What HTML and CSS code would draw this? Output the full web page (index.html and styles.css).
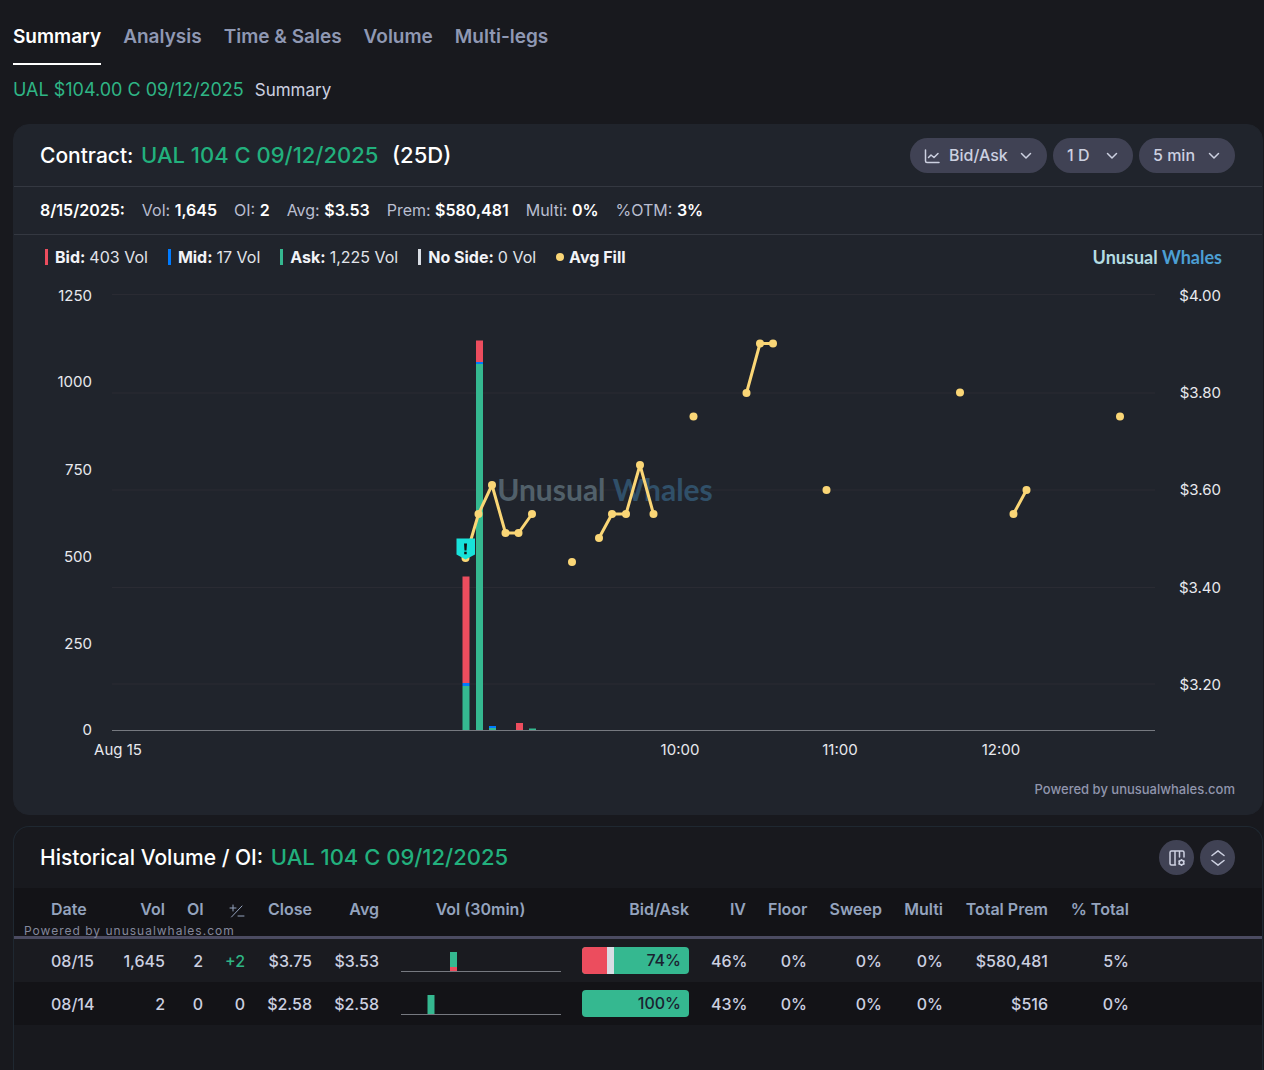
FILE: index.html
```html
<!DOCTYPE html>
<html lang="en">
<head>
  <meta charset="UTF-8">
  <title>UAL $104.00 C 09/12/2025 – Summary</title>
  <meta name="viewport" content="width=device-width, initial-scale=1.0">
  <link rel="stylesheet" href="styles.css">
</head>
<body>

<nav class="tabs">
  <a class="tab active" href="#summary">Summary</a>
  <a class="tab" href="#analysis">Analysis</a>
  <a class="tab" href="#time-sales">Time &amp; Sales</a>
  <a class="tab" href="#volume">Volume</a>
  <a class="tab" href="#multi-legs">Multi-legs</a>
</nav>

<div class="crumbs">
  <a href="#contract">UAL $104.00 C 09/12/2025</a>
  <span>Summary</span>
</div>

<main>
<section class="card contract" id="contract">
  <header class="card-head">
    <h2>Contract: <a href="#contract">UAL 104 C 09/12/2025</a> <span class="days">(25D)</span></h2>
    <div class="controls">
      <label class="pill">
        <svg class="icon" width="16" height="16" viewBox="0 0 16 16"><path d="M1.500 2v11a1.500 1.500 0 0 0 1.500 1.500H15M4.500 9.500l2.500-2.500 3 2.500 4-4"/></svg>
        <select aria-label="Series"><option>Bid/Ask</option></select>
        <svg class="chevron" width="12" height="8" viewBox="0 0 12 8"><path d="M1.500 1.500 6 6l4.500-4.500"/></svg>
      </label>
      <label class="pill">
        <select aria-label="Range"><option>1 D</option></select>
        <svg class="chevron" width="12" height="8" viewBox="0 0 12 8"><path d="M1.500 1.500 6 6l4.500-4.500"/></svg>
      </label>
      <label class="pill">
        <select aria-label="Interval"><option>5 min</option></select>
        <svg class="chevron" width="12" height="8" viewBox="0 0 12 8"><path d="M1.500 1.500 6 6l4.500-4.500"/></svg>
      </label>
    </div>
  </header>

  <div class="stats">
    <b>8/15/2025:</b>
    <span>Vol: <b>1,645</b></span>
    <span>OI: <b>2</b></span>
    <span>Avg: <b>$3.53</b></span>
    <span>Prem: <b>$580,481</b></span>
    <span>Multi: <b>0%</b></span>
    <span>%OTM: <b>3%</b></span>
  </div>

  <div class="legend">
    <span class="key bid"><b>Bid:</b> 403 Vol</span>
    <span class="key mid"><b>Mid:</b> 17 Vol</span>
    <span class="key ask"><b>Ask:</b> 1,225 Vol</span>
    <span class="key none"><b>No Side:</b> 0 Vol</span>
    <span class="key fill"><b>Avg Fill</b></span>
    <div class="brand">Unusual <span>Whales</span></div>
  </div>

  <svg class="chart" viewBox="14 280 1248 490" role="img" aria-label="Volume by side and average fill">
    <g class="grid">
      <path d="M112 294.500H1155M112 393H1155M112 490H1155M112 587.500H1155M112 684H1155"/>
    </g>
    <text class="watermark" x="605" y="501"><tspan class="wm-a">Unusual</tspan> <tspan class="wm-b">Whales</tspan></text>
    <g class="red">
      <rect x="462.500" y="576.500" width="7" height="106.500"/>
      <rect x="476" y="340.500" width="7" height="21.500"/>
      <rect x="516" y="723" width="7" height="7"/>
    </g>
    <g class="blue">
      <rect x="462.500" y="683" width="7" height="3"/>
      <rect x="476" y="362" width="7" height="2"/>
      <rect x="489" y="726" width="7" height="2"/>
    </g>
    <g class="green">
      <rect x="462.500" y="686" width="7" height="44"/>
      <rect x="476" y="364" width="7" height="366"/>
      <rect x="489" y="728" width="7" height="2"/>
      <rect x="529" y="728.500" width="7" height="1.500"/>
    </g>
    <path class="axis" d="M112 730.500H1155"/>

    <path class="avg" d="M465.500 558 478.500 514 492 485 505.500 533H518.500L532 514M599 538 612 514H626L640 465 653.500 514M746.500 393 760 343.500H773M1013.500 514 1026.500 490"/>
    <g class="dots">
      <circle cx="465.500" cy="558" r="4"/><circle cx="478.500" cy="514" r="4"/><circle cx="492" cy="485" r="4"/>
      <circle cx="505.500" cy="533" r="4"/><circle cx="518.500" cy="533" r="4"/><circle cx="532" cy="514" r="4"/>
      <circle cx="572" cy="562" r="4"/><circle cx="599" cy="538" r="4"/><circle cx="612" cy="514" r="4"/>
      <circle cx="626" cy="514" r="4"/><circle cx="640" cy="465" r="4"/><circle cx="653.500" cy="514" r="4"/>
      <circle cx="693.500" cy="416.500" r="4"/><circle cx="746.500" cy="393" r="4"/><circle cx="760" cy="343.500" r="4"/>
      <circle cx="773" cy="343.500" r="4"/><circle cx="826.500" cy="490" r="4"/><circle cx="960" cy="392.500" r="4"/>
      <circle cx="1013.500" cy="514" r="4"/><circle cx="1026.500" cy="490" r="4"/><circle cx="1120" cy="416.500" r="4"/>
    </g>
    <path class="flag" d="M456.500 538.500h18.500v16l-9.500 5-9-5z"/>
    <path class="bang" d="M464 543.500h3l-.5 7h-2zM464.200 551.800h2.500v2.400h-2.500z"/>

    <g class="labels end">
      <text x="92" y="301">1250</text>
      <text x="92" y="387">1000</text>
      <text x="92" y="475">750</text>
      <text x="92" y="562">500</text>
      <text x="92" y="649">250</text>
      <text x="92" y="735">0</text>
      <text x="1221" y="301">$4.00</text>
      <text x="1221" y="398">$3.80</text>
      <text x="1221" y="495">$3.60</text>
      <text x="1221" y="593">$3.40</text>
      <text x="1221" y="690">$3.20</text>
    </g>
    <g class="labels center">
      <text x="118" y="755">Aug 15</text>
      <text x="680" y="755">10:00</text>
      <text x="840" y="755">11:00</text>
      <text x="1001" y="755">12:00</text>
    </g>
  </svg>

  <footer class="powered">Powered by unusualwhales.com</footer>
</section>

<section class="card history" id="history">
  <header class="card-head">
    <h2>Historical Volume / OI: <a href="#history">UAL 104 C 09/12/2025</a></h2>
    <div class="controls">
      <button class="round" type="button" aria-label="Columns">
        <svg class="icon" width="16" height="16" viewBox="0 0 16 16"><path d="M6.500 15h-4A1.500 1.500 0 0 1 1 13.500v-11A1.500 1.500 0 0 1 2.500 1h11A1.500 1.500 0 0 1 15 2.500V7M6 1v14M10.500 1v6"/><circle cx="12.500" cy="12.500" r="2.300"/><path d="M12.500 9.700v.3M12.500 15v.3M10 11l.2.200M15 11l-.2.200M10 14l.2-.2M15 14l-.2-.2"/></svg>
      </button>
      <button class="round" type="button" aria-label="Expand">
        <svg class="icon" width="16" height="16" viewBox="0 0 16 16"><path d="M2 5.500 8 .800l6 4.700M2 10.500l6 4.700 6-4.700"/></svg>
      </button>
    </div>
  </header>

  <div class="table-wrap">
    <table>
      <colgroup>
        <col class="w-date"><col class="w-vol"><col class="w-oi"><col class="w-diff"><col class="w-vol"><col class="w-vol">
        <col class="w-spark"><col class="w-side"><col class="w-iv"><col class="w-floor"><col class="w-sweep"><col class="w-floor">
        <col class="w-prem"><col class="w-total"><col>
      </colgroup>
      <thead>
        <tr>
          <th>Date</th><th>Vol</th><th>OI</th>
          <th><svg class="diff" width="16" height="14" viewBox="0 0 16 14" role="img" aria-label="Change"><path d="M1 4h6M4 1v6M2.500 13 13 2M9 12h6"/></svg></th>
          <th>Close</th><th>Avg</th><th>Vol (30min)</th><th>Bid/Ask</th><th>IV</th><th>Floor</th>
          <th>Sweep</th><th>Multi</th><th>Total Prem</th><th>% Total</th><th></th>
        </tr>
      </thead>
      <tbody>
        <tr>
          <td>08/15</td><td>1,645</td><td>2</td><td class="up">+2</td><td>$3.75</td><td>$3.53</td>
          <td><svg class="spark" width="160" height="28" viewBox="0 0 160 28"><path class="green" d="M49 5h7v15h-7z"/><path class="red" d="M49 20h7v4h-7z"/><path class="axis" d="M0 24.500h160"/></svg></td>
          <td><div class="side"><i class="s-bid" style="width:23.500%"></i><i class="s-none" style="width:6.500%"></i><span>74%</span></div></td>
          <td>46%</td><td>0%</td><td>0%</td><td>0%</td><td>$580,481</td><td>5%</td><td></td>
        </tr>
        <tr>
          <td>08/14</td><td>2</td><td>0</td><td>0</td><td>$2.58</td><td>$2.58</td>
          <td><svg class="spark" width="160" height="28" viewBox="0 0 160 28"><path class="green" d="M26.500 5h7v19h-7z"/><path class="axis" d="M0 24.500h160"/></svg></td>
          <td><div class="side"><span>100%</span></div></td>
          <td>43%</td><td>0%</td><td>0%</td><td>0%</td><td>$516</td><td>0%</td><td></td>
        </tr>
      </tbody>
    </table>
    <div class="table-credit">Powered by unusualwhales.com</div>
  </div>
</section>
</main>

</body>
</html>
```

FILE: styles.css
```css
* { box-sizing: border-box; }
body {
  margin: 0;
  min-height: 100vh;
  display: flex;
  flex-direction: column;
  padding: 0 1px 0 13px;
  background: #18191e;
  color: #ccd0e0;
  font-family: Inter, "Liberation Sans", sans-serif;
  font-size: 16px;
  line-height: 24px;
}
a { color: #2fb585; text-decoration: none; }
b { font-weight: 600; }

/* tabs */
.tabs {
  display: flex;
  gap: 22px;
  padding-top: 9px;
  font-size: 19px;
  font-weight: 600;
}
.tab {
  height: 56px;
  line-height: 56px;
  color: #8f98b3;
}
.tab.active {
  color: #fff;
  border-bottom: 2px solid #fff;
}
.crumbs {
  display: flex;
  gap: 11px;
  padding: 13px 0 22px;
  font-size: 17px;
}
.crumbs a { font-size: 18px; }

/* cards */
main {
  flex: 1;
  display: flex;
  flex-direction: column;
  gap: 11px;
}
.card {
  border: 1px solid #1f2831;
  border-radius: 16px;
}
.contract {
  background: #20242c;
  border-color: #20242c;
}
.history {
  flex: 1;
  border-bottom: 0;
  border-radius: 16px 16px 0 0;
}
.card-head {
  display: flex;
  align-items: center;
  justify-content: space-between;
  height: 61px;
  padding: 0 27px 0 26px;
}
h2 {
  margin: 0;
  color: #fff;
  font-size: 21px;
  font-weight: 500;
}
h2 a, .days { font-size: 22px; }
h2 a {
  margin-left: 2px;
  color: #22b07d;
}
.days { margin-left: 8px; }
.controls {
  display: flex;
  gap: 6px;
}
.pill {
  display: flex;
  align-items: center;
  height: 35px;
  padding: 0 15px 0 14px;
  border-radius: 18px;
  background: #404254;
}
.pill .icon { margin-right: 9px; }
.pill select {
  appearance: none;
  border: 0;
  padding: 0 0 2px;
  margin-right: 12px;
  min-width: 27px;
  background: none;
  color: #ccd0e0;
  font: inherit;
  font-weight: 500;
}
.pill option { background: #404254; }
.icon, .chevron, .diff {
  fill: none;
  stroke: #ccd0e0;
  stroke-width: 1.5;
  stroke-linecap: round;
  stroke-linejoin: round;
}
.round {
  display: flex;
  align-items: center;
  justify-content: center;
  width: 35px;
  height: 35px;
  padding: 0;
  border: 0;
  border-radius: 50%;
  background: #404254;
}

.stats {
  display: flex;
  align-items: center;
  gap: 17px;
  height: 49px;
  padding: 0 26px 2px;
  border-top: 1px solid #343841;
  border-bottom: 1px solid #343841;
  color: #b9bed0;
}
.stats b { color: #fff; }

.legend {
  display: flex;
  align-items: center;
  gap: 20px;
  height: 45px;
  padding: 0 40px 2px 31px;
  color: #e2e4ea;
}
.key {
  display: flex;
  align-items: center;
  gap: 4px;
}
.key b { color: #f2f3f7; font-weight: 700; }
.key::before {
  content: "";
  width: 3px;
  height: 16px;
  margin-right: 3px;
}
.bid::before { background: #ec4d5e; }
.mid::before { background: #007bff; }
.ask::before { background: #35b890; }
.none::before { background: #d8dde4; }
.fill::before {
  width: 8px;
  height: 8px;
  margin-right: 1px;
  border-radius: 50%;
  background: #fad676;
}
.brand {
  margin-left: auto;
  color: #b4dce2;
  font-family: Lato, sans-serif;
  font-size: 18px;
  font-weight: 700;
}
.brand span { color: #4c9fd3; }

/* chart */
.chart {
  display: block;
  width: 100%;
  height: auto;
}
.grid path { stroke: #2a2b33; }
.axis { stroke: #767980; }
.red { fill: #ec4d5e; }
.blue { fill: #007bff; }
.green { fill: #35b890; }
.avg {
  fill: none;
  stroke: #fad676;
  stroke-width: 3;
  stroke-linejoin: bevel;
}
.dots { fill: #fad676; }
.flag { fill: #18e2da; }
.bang { fill: #111; }
.watermark {
  font-family: Lato, sans-serif;
  font-size: 30px;
  font-weight: 700;
  text-anchor: middle;
}
.wm-a { fill: #51606a; }
.wm-b { fill: #305069; }
.labels { fill: #e8e9ee; font-size: 15px; }
.labels.end { text-anchor: end; }
.labels.center { text-anchor: middle; }
.powered {
  padding: 7px 27px 13px;
  color: #9095ad;
  font-size: 13px;
  font-weight: 500;
  text-align: right;
}

/* history table */
.table-wrap { position: relative; }
table {
  width: 100%;
  table-layout: fixed;
  border-spacing: 0;
}
.w-date { width: 95px; }
.w-vol { width: 67px; }
.w-oi { width: 38px; }
.w-diff { width: 42px; }
.w-spark { width: 181px; }
.w-side { width: 129px; }
.w-iv { width: 57px; }
.w-floor { width: 61px; }
.w-sweep { width: 75px; }
.w-prem { width: 105px; }
.w-total { width: 81px; }
th, td {
  padding: 0 11px;
  text-align: right;
  white-space: nowrap;
}
th {
  height: 51px;
  padding-bottom: 6px;
  border-bottom: 3px solid #4b4b61;
  background: #131317;
  color: #94a3be;
  font-weight: 600;
}
td { height: 43px; font-weight: 500; }
th:first-child, td:first-child {
  padding-left: 37px;
  padding-right: 0;
  text-align: left;
}
th:nth-child(7) { text-align: center; }
tbody tr { background: #1a1b20; }
tbody tr:nth-child(even) { background: #131317; }
.diff {
  display: inline-block;
  vertical-align: middle;
  stroke: #94a3be;
  stroke-width: 1;
}
.up { color: #2fb585; }
.spark { display: block; }
.side {
  display: flex;
  height: 27px;
  border-radius: 4px;
  overflow: hidden;
  background: #35b890;
  color: #1a2230;
}
.side span {
  margin-left: auto;
  padding-right: 8px;
  line-height: 27px;
}
.s-bid { background: #ec4d5e; }
.s-none { background: #d8dde4; }
.table-credit {
  position: absolute;
  left: 10px;
  top: 35px;
  color: #84889c;
  font-size: 12px;
  line-height: 16px;
  letter-spacing: 1px;
}
```
